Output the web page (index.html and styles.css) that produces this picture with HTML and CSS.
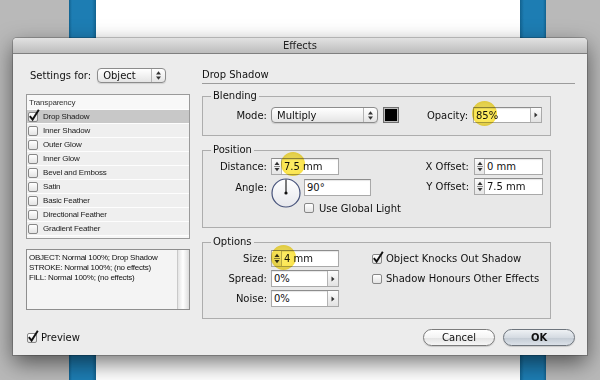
FILE: index.html
```html
<!DOCTYPE html>
<html lang="en">
<head>
  <meta charset="UTF-8" />
  <meta name="viewport" content="width=device-width, initial-scale=1.0"/>
  <title>Effects</title>
  <link rel="stylesheet" href="styles.css">
</head>
<body>
<div class="dialog">
  <div class="titlebar">Effects</div>

  <div class="content">
    <div class="left">
      <div class="settings">
        <span>Settings for:</span>
        <span class="popup obj">
          <span class="txt">Object</span>
          <span class="arr"><svg width="7" height="11" viewBox="0 0 7 11"><path d="M1 4.5L3.5 1.2 6 4.5z M1 6.5L3.5 9.8 6 6.5z" fill="#333"/></svg></span>
        </span>
      </div>

      <ul class="fxlist">
        <li class="head">Transparency</li>
        <li class="sel"><span class="cb on"><svg class="tick" width="12" height="13" viewBox="0 0 12 13"><path d="M1.8 7.2L4.6 10.6 10.8 0.8" fill="none" stroke="#111" stroke-width="1.9"/></svg></span>Drop Shadow</li>
        <li><span class="cb"></span>Inner Shadow</li>
        <li><span class="cb"></span>Outer Glow</li>
        <li><span class="cb"></span>Inner Glow</li>
        <li><span class="cb"></span>Bevel and Emboss</li>
        <li><span class="cb"></span>Satin</li>
        <li><span class="cb"></span>Basic Feather</li>
        <li><span class="cb"></span>Directional Feather</li>
        <li><span class="cb"></span>Gradient Feather</li>
      </ul>

      <div class="notes">
        <div class="notes-text">
          <p>OBJECT: Normal 100%; Drop Shadow</p>
          <p>STROKE: Normal 100%; (no effects)</p>
          <p>FILL: Normal 100%; (no effects)</p>
        </div>
        <div class="scroll"></div>
      </div>
    </div>

    <div class="right">
      <div class="heading">Drop Shadow</div>

      <fieldset class="group blending">
        <legend>Blending</legend>
        <div class="row">
          <label class="lbl">Mode:</label>
          <span class="popup mode">
            <span class="txt">Multiply</span>
            <span class="arr"><svg width="7" height="11" viewBox="0 0 7 11"><path d="M1 4.5L3.5 1.2 6 4.5z M1 6.5L3.5 9.8 6 6.5z" fill="#333"/></svg></span>
          </span>
          <span class="swatch"></span>
          <label class="opacity-lbl">Opacity:</label>
          <span class="field w69 short">
            <span class="v">85%</span>
            <span class="mbtn"><svg width="4" height="6" viewBox="0 0 4 6"><path d="M0.5 0.5L3.5 3 0.5 5.5z" fill="#333"/></svg></span>
            <span class="hl hl-opacity"></span>
          </span>
        </div>
      </fieldset>

      <fieldset class="group position">
        <legend>Position</legend>
        <div class="pos">
          <div class="pos-left">
            <div class="row">
              <label class="lbl">Distance:</label>
              <span class="field w68">
                <span class="stepper"><svg width="8" height="15" viewBox="0 0 8 15"><path d="M1.5 6L4 2.8 6.5 6z M1.5 9L4 12.2 6.5 9z" fill="#333"/><path d="M1 7.5H7" stroke="#8a8a8a"/></svg></span>
                <span class="v">7.5 mm</span>
                <span class="hl hl-distance"></span>
              </span>
            </div>
            <div class="angle">
              <label class="lbl">Angle:</label>
              <svg class="dial" width="30" height="30" viewBox="0 0 30 30">
                <defs>
                  <linearGradient id="dialfill" x1="0" y1="0" x2="0" y2="1">
                    <stop offset="0" stop-color="#ffffff"/>
                    <stop offset="1" stop-color="#e6e7ec"/>
                  </linearGradient>
                </defs>
                <circle cx="15" cy="15" r="14" fill="url(#dialfill)" stroke="#46527a" stroke-width="1.2"/>
                <path d="M15 15V1.5" stroke="#111" stroke-width="1.1"/>
                <circle cx="15" cy="15" r="1.6" fill="#111"/>
              </svg>
              <div class="angle-col">
                <span class="field w67"><span class="v">90°</span></span>
                <label class="check"><span class="cb"></span>Use Global Light</label>
              </div>
            </div>
          </div>
          <div class="pos-right">
            <div class="row">
              <label class="olbl">X Offset:</label>
              <span class="field w69">
                <span class="stepper"><svg width="8" height="15" viewBox="0 0 8 15"><path d="M1.5 6L4 2.8 6.5 6z M1.5 9L4 12.2 6.5 9z" fill="#333"/><path d="M1 7.5H7" stroke="#8a8a8a"/></svg></span>
                <span class="v">0 mm</span>
              </span>
            </div>
            <div class="row">
              <label class="olbl">Y Offset:</label>
              <span class="field w69">
                <span class="stepper"><svg width="8" height="15" viewBox="0 0 8 15"><path d="M1.5 6L4 2.8 6.5 6z M1.5 9L4 12.2 6.5 9z" fill="#333"/><path d="M1 7.5H7" stroke="#8a8a8a"/></svg></span>
                <span class="v">7.5 mm</span>
              </span>
            </div>
          </div>
        </div>
      </fieldset>

      <fieldset class="group options">
        <legend>Options</legend>
        <div class="opts">
          <div class="opts-left">
            <div class="row">
              <label class="lbl">Size:</label>
              <span class="field w68">
                <span class="stepper"><svg width="8" height="15" viewBox="0 0 8 15"><path d="M1.5 6L4 2.8 6.5 6z M1.5 9L4 12.2 6.5 9z" fill="#333"/><path d="M1 7.5H7" stroke="#8a8a8a"/></svg></span>
                <span class="v">4 mm</span>
                <span class="hl hl-size"></span>
              </span>
            </div>
            <div class="row">
              <label class="lbl">Spread:</label>
              <span class="field w68">
                <span class="v">0%</span>
                <span class="mbtn"><svg width="4" height="6" viewBox="0 0 4 6"><path d="M0.5 0.5L3.5 3 0.5 5.5z" fill="#333"/></svg></span>
              </span>
            </div>
            <div class="row">
              <label class="lbl">Noise:</label>
              <span class="field w68">
                <span class="v">0%</span>
                <span class="mbtn"><svg width="4" height="6" viewBox="0 0 4 6"><path d="M0.5 0.5L3.5 3 0.5 5.5z" fill="#333"/></svg></span>
              </span>
            </div>
          </div>
          <div class="opts-right">
            <label class="check row"><span class="cb on"><svg class="tick" width="12" height="13" viewBox="0 0 12 13"><path d="M1.8 7.2L4.6 10.6 10.8 0.8" fill="none" stroke="#111" stroke-width="1.9"/></svg></span>Object Knocks Out Shadow</label>
            <label class="check row"><span class="cb"></span>Shadow Honours Other Effects</label>
          </div>
        </div>
      </fieldset>
    </div>
  </div>

  <div class="footer">
    <label class="check preview"><span class="cb on"><svg class="tick" width="12" height="13" viewBox="0 0 12 13"><path d="M1.8 7.2L4.6 10.6 10.8 0.8" fill="none" stroke="#111" stroke-width="1.9"/></svg></span>Preview</label>
    <button class="btn cancel">Cancel</button>
    <button class="btn ok">OK</button>
  </div>
</div>
</body>
</html>
```

FILE: styles.css
```css
* { box-sizing: border-box; }

body {
  margin: 0;
  height: 380px;
  overflow: hidden;
  font-family: "DejaVu Sans", sans-serif;
  font-size: 10px;
  color: #111;
  background: linear-gradient(to right,
    #b9b9b9 0, #b9b9b9 69px,
    #12628f 69px, #1d7db3 72px, #1d7db3 92px, #12628f 96px,
    #ffffff 96px, #ffffff 520px,
    #12628f 520px, #1d7db3 524px, #1d7db3 543px, #12628f 546px,
    #b9b9b9 546px);
}

.dialog {
  width: 574px;
  height: 317px;
  margin: 38px 0 0 13px;
  background: #ececec;
  border-radius: 4px 4px 0 0;
  box-shadow: 0 8px 22px rgba(0,0,0,0.55), 0 0 0 1px rgba(0,0,0,0.2);
  display: flex;
  flex-direction: column;
}

.titlebar {
  height: 16px;
  line-height: 15px;
  text-align: center;
  color: #222;
  background: linear-gradient(#e2e2e2, #bcbcbc);
  border-bottom: 1px solid #7f7f7f;
  border-radius: 4px 4px 0 0;
}

.content {
  display: grid;
  grid-template-columns: 164px 349px;
  column-gap: 12px;
  padding: 14px 0 0 13px;
}

/* left side */
.settings { display: flex; align-items: center; gap: 6px; height: 15px; padding-left: 4px; }

.popup {
  display: inline-flex;
  align-items: center;
  height: 15px;
  border: 1px solid #8c8c8c;
  border-radius: 4px;
  background: linear-gradient(#ffffff, #f2f2f2 50%, #e4e4e4);
  box-shadow: 0 1px 1px rgba(0,0,0,0.12);
}
.popup .txt { flex: 1; padding-left: 5px; }
.popup .arr {
  width: 14px;
  align-self: stretch;
  border-left: 1px solid #b4b4b4;
  display: flex;
  align-items: center;
  justify-content: center;
}
.obj { width: 69px; }
.mode { width: 107px; height: 16px; }

.fxlist {
  list-style: none;
  margin: 11px 0 0;
  padding: 0;
  height: 145px;
  border: 1px solid #9a9a9a;
  background: #f6f6f6;
  font-family: "Liberation Sans", sans-serif;
  font-size: 8px;
  letter-spacing: -0.2px;
}
.fxlist li {
  height: 14px;
  display: flex;
  align-items: center;
  padding-left: 1px;
  background: #efefef;
  border-bottom: 1px solid #fdfdfd;
  color: #1a1a1a;
}
.fxlist li.head { height: 15px; padding-left: 2px; background: #f8f8f8; color: #333; }
.fxlist li.sel { background: #c8c8c8; }
.fxlist .cb { margin-right: 5px; }

.notes {
  display: flex;
  margin-top: 10px;
  height: 61px;
  border: 1px solid #8e8e8e;
  background: #f4f4f4;
}
.notes-text {
  flex: 1;
  padding: 3px 2px;
  font-family: "Liberation Sans", sans-serif;
  font-size: 8px;
  letter-spacing: -0.25px;
  line-height: 10px;
}
.notes-text p { margin: 0; }
.scroll {
  width: 12px;
  border-left: 1px solid #c9c9c9;
  background: linear-gradient(to right, #e4e4e4, #ffffff 45%, #dcdcdc);
}

/* checkboxes */
.cb {
  position: relative;
  flex: none;
  width: 10px;
  height: 10px;
  border: 1px solid #878787;
  border-radius: 2px;
  background: linear-gradient(#ffffff, #e3e3e3);
}
.cb .tick { position: absolute; left: -1px; top: -4px; overflow: visible; }
.check { display: flex; align-items: center; gap: 4px; }

/* right side */
.heading {
  line-height: 14px;
  padding-bottom: 1px;
  border-bottom: 1px solid #9c9c9c;
  margin-right: -24px;
}

.group {
  margin: 0;
  min-width: 0;
  border: 1px solid #adadad;
  background: #e8e8e8;
}
.group legend {
  margin-left: 8px;
  padding: 0 2px;
  line-height: 12px;
}
.blending { margin-top: 6px; padding: 5px 8px 12px 0; }
.position { margin-top: 8px; padding: 2px 7px 14px 0; }
.options { margin-top: 8px; padding: 2px 7px 11px 0; }

.row { display: flex; align-items: center; height: 17px; }
.blending .row { height: 16px; }
.lbl { flex: none; width: 64px; margin-right: 4px; text-align: right; }

.swatch {
  width: 16px;
  height: 16px;
  margin-left: 5px;
  background: #000;
  border: 1px solid #6f6f6f;
  box-shadow: inset 0 0 0 1px #bdbdbd;
}
.opacity-lbl { margin-left: auto; margin-right: 5px; }

.field {
  position: relative;
  display: inline-flex;
  align-items: center;
  height: 17px;
  background: #fff;
  border: 1px solid #a9a9a9;
  border-top-color: #8d8d8d;
  box-shadow: inset 0 1px 1px rgba(0,0,0,0.1);
}
.field.short { height: 16px; }
.field .v { flex: 1; padding-left: 2px; white-space: nowrap; }
.w67 { width: 67px; }
.w68 { width: 68px; }
.w69 { width: 69px; }

.stepper {
  width: 10px;
  align-self: stretch;
  border-right: 1px solid #b7b7b7;
  background: linear-gradient(#fbfbfb, #e6e6e6);
  display: flex;
  align-items: center;
  justify-content: center;
}
.mbtn {
  width: 11px;
  align-self: stretch;
  border-left: 1px solid #b3b3b3;
  background: linear-gradient(#fdfdfd, #e2e2e2);
  display: flex;
  align-items: center;
  justify-content: center;
}

.pos { display: flex; justify-content: space-between; }
.pos-left, .pos-right { display: flex; flex-direction: column; gap: 3px; }
.olbl { width: 46px; margin-right: 5px; text-align: right; }
.angle { display: flex; align-items: flex-start; }
.angle .lbl { line-height: 19px; }
.dial { flex: none; }
.angle-col { display: flex; flex-direction: column; gap: 7px; margin-left: 3px; padding-top: 1px; }
.angle-col .check { height: 10px; gap: 5px; }

.opts { display: flex; }
.opts-left, .opts-right { display: flex; flex-direction: column; gap: 3px; }
.opts-right { margin-left: 33px; }

/* yellow marker circles drawn over the fields */
.hl {
  position: absolute;
  width: 25px;
  height: 25px;
  border-radius: 50%;
  background: radial-gradient(circle, #fdec66 0, #fbe654 55%, #f2d634 85%, #e2c22a 100%);
  mix-blend-mode: multiply;
  pointer-events: none;
}
.hl-opacity { left: -2px; top: -7px; }
.hl-distance { left: 9px; top: -7px; width: 24px; height: 24px; }
.hl-size { left: -1px; top: -6px; }

/* footer */
.footer {
  display: flex;
  align-items: center;
  padding: 10px 12px 0 14px;
}
.preview { gap: 4px; }
.btn {
  width: 72px;
  height: 17px;
  padding: 0;
  font-family: "DejaVu Sans", sans-serif;
  font-size: 10px;
  color: #111;
  border: 1px solid #7b7b7b;
  border-radius: 9px;
  background: linear-gradient(#ffffff, #f4f4f4 50%, #e4e4e4 52%, #f6f6f6);
  box-shadow: 0 1px 1px rgba(0,0,0,0.15);
}
.cancel { margin-left: auto; }
.ok {
  margin-left: 8px;
  font-weight: bold;
  border-color: #6d747c;
  background: linear-gradient(#eef1f4, #d5dbe2 50%, #c3cbd4 52%, #dbe1e8);
}
```
